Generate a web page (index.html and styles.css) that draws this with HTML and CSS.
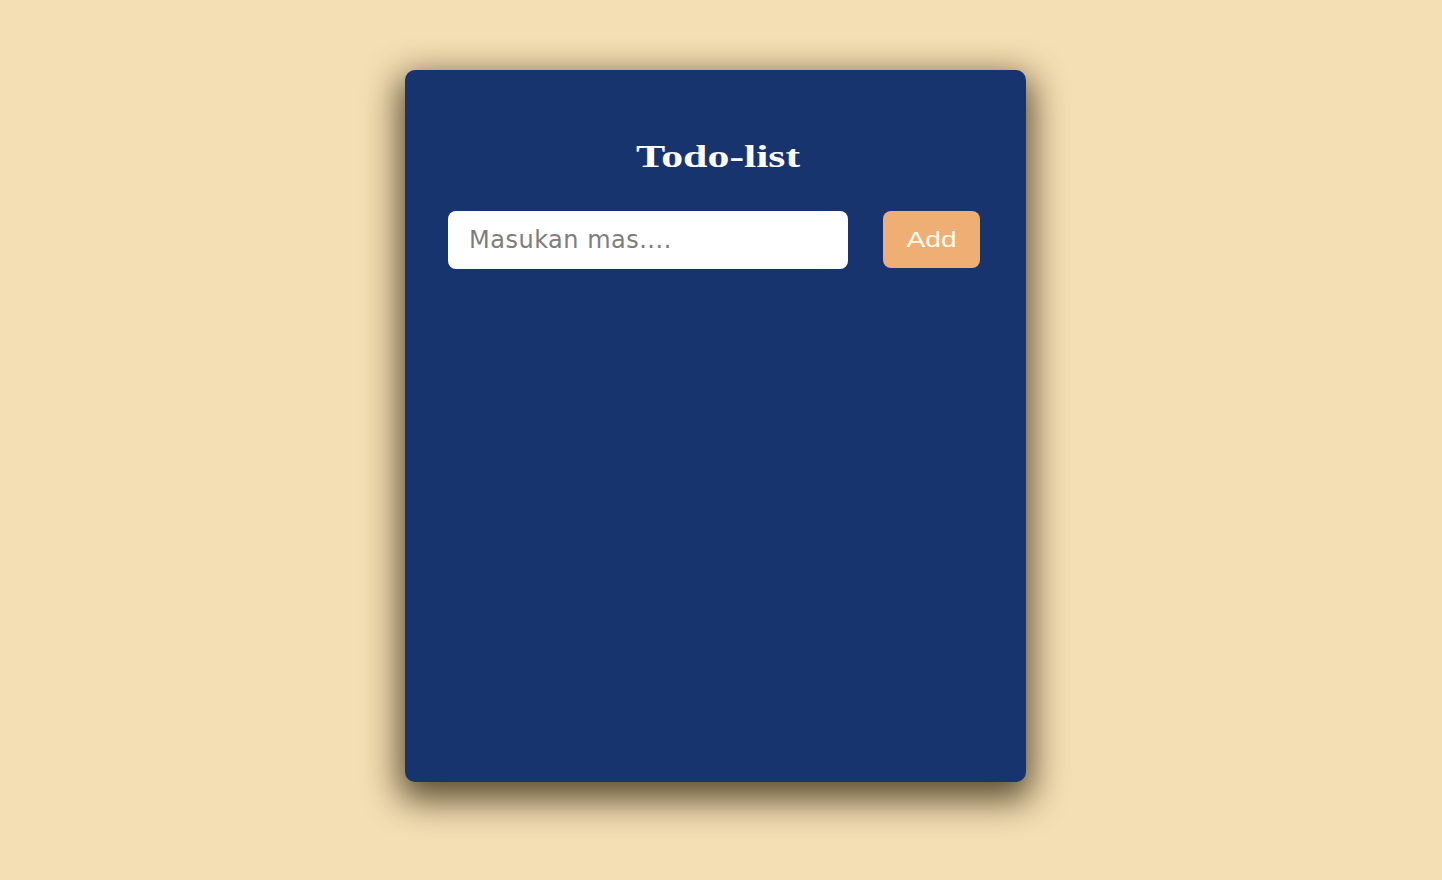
FILE: index.html
```html
<!DOCTYPE html>
<html lang="id">
<head>
<meta charset="utf-8">
<title>Todo-list</title>
<link rel="stylesheet" href="styles.css">
</head>
<body>
<main class="page">
  <section class="card">
    <h1 class="title"><span class="title-text">Todo-list</span></h1>
    <form class="todo-form" onsubmit="return false">
      <input class="todo-input" type="text" placeholder="Masukan mas....">
      <button class="add-btn" type="submit"><span class="add-label">Add</span></button>
    </form>
    <ul class="todo-list"></ul>
  </section>
</main>
</body>
</html>
```

FILE: styles.css
```css
* { box-sizing: border-box; }

html, body {
  margin: 0;
  height: 100%;
}

body {
  background: #f4deb3;
  font-family: "Liberation Sans", Arial, sans-serif;
}

.page {
  display: flex;
  justify-content: center;
  padding: 70px 11px 0 0;
}

.card {
  width: 621px;
  height: 712px;
  background: #18346e;
  border-radius: 10px;
  box-shadow: 0 12px 34px 6px rgba(40, 30, 10, 0.75);
  padding: 0 46px 0 43px;
}

.title {
  margin: 0;
  padding-top: 62px;
  text-align: center;
  font-family: "Liberation Serif", "Times New Roman", serif;
  font-weight: bold;
  font-size: 32px;
  line-height: 48px;
  color: #ffffff;
}

.title-text {
  display: inline-block;
  transform: scaleX(1.37);
  padding-left: 6px;
}

.todo-form {
  display: flex;
  justify-content: space-between;
  margin-top: 31px;
}

.todo-input {
  width: 400px;
  height: 58px;
  border: none;
  border-radius: 8px;
  background: #ffffff;
  padding: 0 20px 0 21px;
  font-family: "DejaVu Sans", sans-serif;
  font-size: 24px;
  letter-spacing: 0.5px;
  color: #333;
  outline: none;
}

.todo-input::placeholder {
  color: #7d7d7d;
}

.add-btn {
  width: 97px;
  height: 57px;
  border: none;
  border-radius: 8px;
  background: #efae73;
  color: #fffbec;
  font-family: "Liberation Sans", Arial, sans-serif;
  font-size: 22px;
  padding: 0;
  cursor: pointer;
}

.add-label {
  display: inline-block;
  transform: scaleX(1.28);
}

.todo-list {
  list-style: none;
  margin: 0;
  padding: 0;
}
```
